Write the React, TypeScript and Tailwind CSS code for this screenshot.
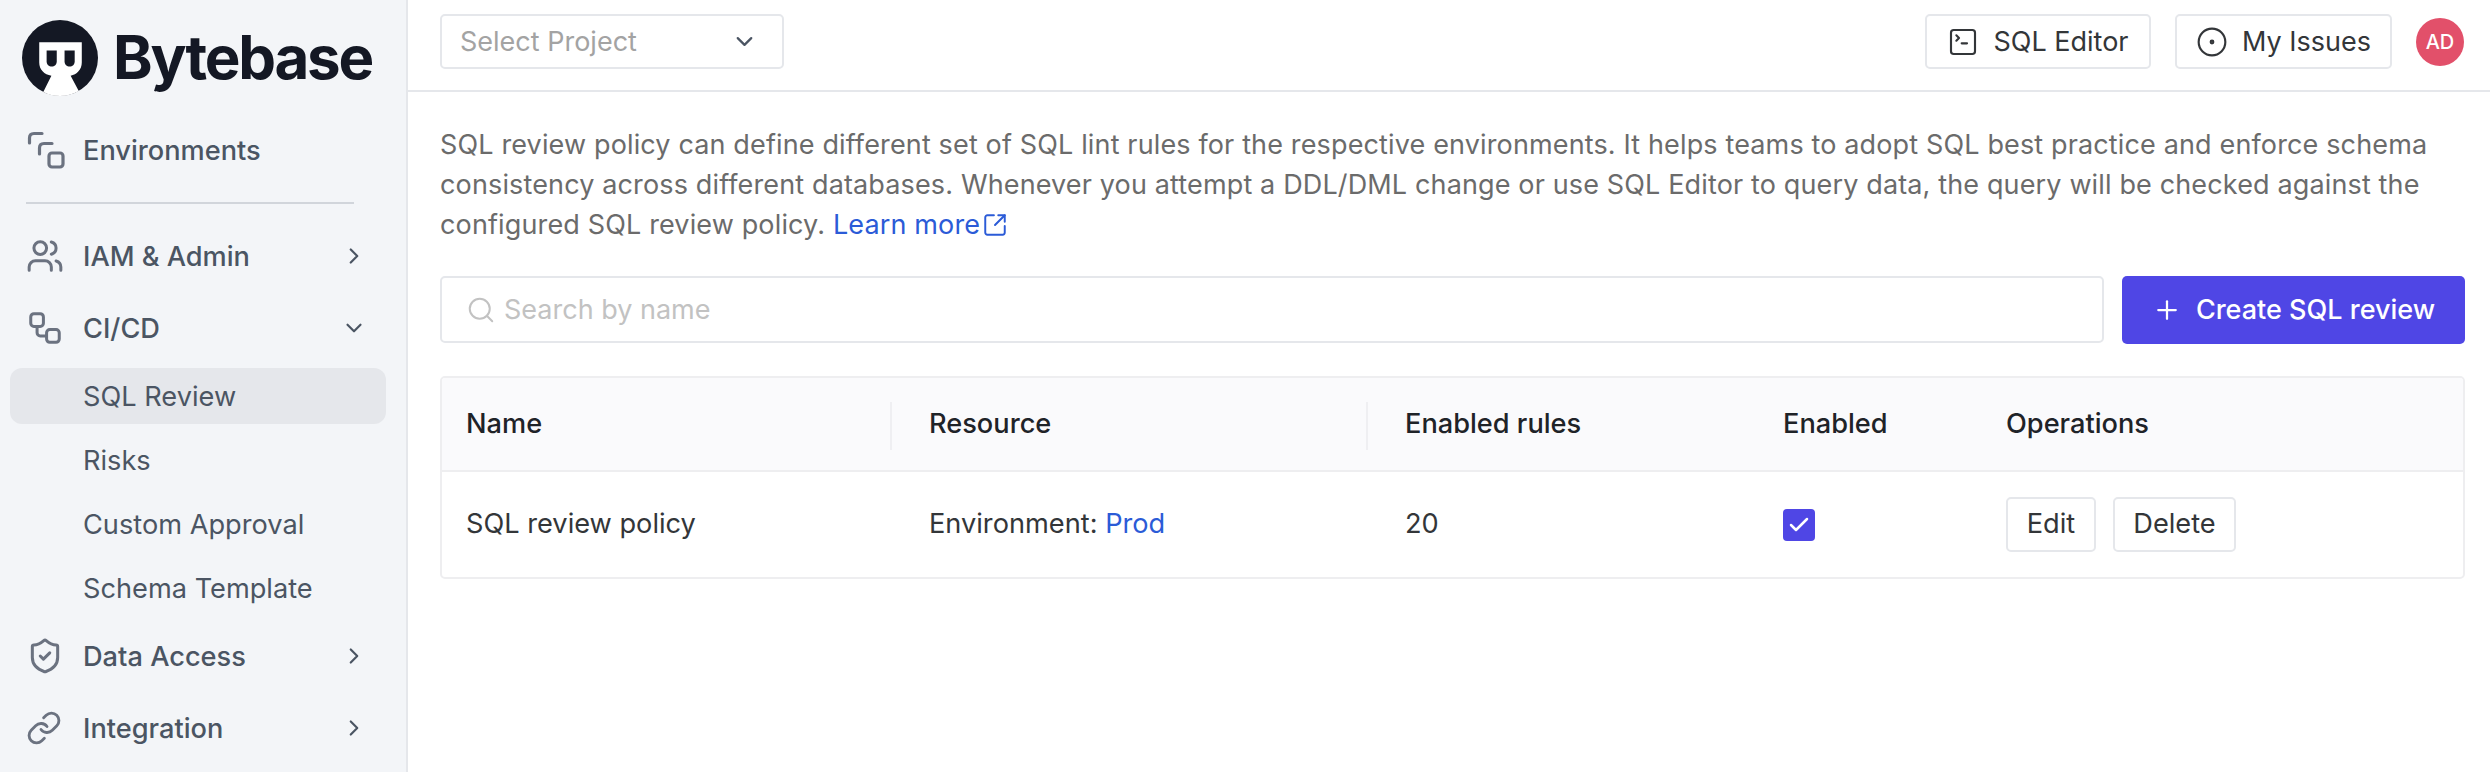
import {
  ChevronDown,
  ChevronRight,
  CircleDot,
  Link,
  Plus,
  Search,
  ShieldCheck,
  SquareArrowOutUpRight,
  SquareTerminal,
  Users,
  Workflow,
  Check,
} from "lucide-react";

const FONT = "font-['Inter',sans-serif]";

// ── Logo ──────────────────────────────────────────────────────────────────────
function LogoMark() {
  return (
    <svg width="76" height="76" viewBox="0 0 75 75" className="shrink-0">
      <circle cx="37.5" cy="37.5" r="37.5" fill="#141824" />
      <path
        d="M17 22 H59 V42 C59 49 54 54 48 55 L56 70 C50 73.5 44 75 37.5 75 C31 75 26 73.5 21 71 L29 55 C22 54 17 49 17 42 Z"
        fill="#ffffff"
      />
      <path d="M24.3 30 H34.3 V41 C34.3 44 32 46 29.3 46 C26.6 46 24.3 44 24.3 41 Z" fill="#141824" />
      <path d="M42 30 H52 V41 C52 44 49.7 46 47 46 C44.3 46 42 44 42 41 Z" fill="#141824" />
    </svg>
  );
}

function EnvironmentsIcon() {
  return (
    <svg
      width="38"
      height="38"
      viewBox="0 0 38 38"
      fill="none"
      stroke="currentColor"
      strokeWidth="3.2"
      strokeLinecap="round"
      className="ml-[1px] shrink-0"
    >
      <path d="M15 2.5 H7 Q2.5 2.5 2.5 7 V12" />
      <path d="M25 12.5 H17 Q12.5 12.5 12.5 17 V23" />
      <rect x="22" y="22" width="14" height="14" rx="3" />
    </svg>
  );
}

// ── Sidebar ───────────────────────────────────────────────────────────────────
function NavItem({
  label,
  icon,
  open,
}: {
  label: string;
  icon: React.ReactNode;
  open?: boolean;
}) {
  return (
    <div className="flex h-[56px] items-center pl-[26px] pr-[45px] text-[#4b5563]">
      <div className="flex w-[57px] shrink-0 items-center text-[#6b7280]">{icon}</div>
      <span className="flex-1 pt-[2px] text-[27.2px] font-medium">{label}</span>
      {open === undefined ? null : open ? (
        <ChevronDown size={26} strokeWidth={2} className="mr-[-6px]" />
      ) : (
        <ChevronRight size={26} strokeWidth={2} className="mr-[-6px]" />
      )}
    </div>
  );
}

function SubItem({ label, active }: { label: string; active?: boolean }) {
  return (
    <div
      className={`flex h-[56px] items-center rounded-[12px] pl-[73px] pt-[2px] text-[27.2px] text-[#4b5563] ${
        active ? "bg-[#e5e7eb]" : ""
      }`}
    >
      {label}
    </div>
  );
}

function Sidebar() {
  return (
    <aside className="flex h-full w-[408px] shrink-0 flex-col overflow-hidden border-r-2 border-[#e5e7eb] bg-[#f3f5f8]">
      <div className="flex items-center gap-[15px] pl-[22px] pt-[20px]">
        <LogoMark />
        <span className="mt-[-3px] text-[60px] leading-none font-bold tracking-[-2.2px] text-[#141824]">
          Bytebase
        </span>
      </div>
      <div className="mt-[26px]">
        <NavItem label="Environments" icon={<EnvironmentsIcon />} />
      </div>
      <div className="mx-[26px] mt-[24px] h-[2px] w-[328px] bg-[#d1d5db]" />
      <div className="mt-[24px] flex flex-col gap-[16px]">
        <NavItem label="IAM & Admin" open={false} icon={<Users size={38} strokeWidth={1.9} />} />
        <NavItem label="CI/CD" open={true} icon={<Workflow size={38} strokeWidth={1.9} />} />
      </div>
      <div className="ml-[10px] mr-[20px] mt-[12px] flex flex-col gap-[8px]">
        <SubItem label="SQL Review" active />
        <SubItem label="Risks" />
        <SubItem label="Custom Approval" />
        <SubItem label="Schema Template" />
      </div>
      <div className="mt-[12px] flex flex-col gap-[16px]">
        <NavItem label="Data Access" open={false} icon={<ShieldCheck size={38} strokeWidth={1.9} />} />
        <NavItem label="Integration" open={false} icon={<Link size={36} strokeWidth={1.9} />} />
      </div>
    </aside>
  );
}

// ── Top bar ───────────────────────────────────────────────────────────────────
function TopBar() {
  return (
    <header className="flex h-[92px] shrink-0 items-start justify-between border-b-2 border-[#e5e7eb] pl-[32px] pr-[26px] pt-[14px]">
      <div className="flex h-[55px] w-[344px] items-center justify-between rounded-[5px] border-2 border-[#e5e7eb] pl-[18px] pr-[24px] text-[27px] text-[#a3a3a3]">
        <span className="pt-[2px]">Select Project</span>
        <ChevronDown size={27} strokeWidth={2} className="text-[#4b5563]" />
      </div>
      <div className="flex items-center gap-[24px] text-[27px] text-[#333639]">
        <div className="flex h-[55px] w-[226px] items-center justify-center gap-[14px] rounded-[5px] border-2 border-[#e5e7eb]">
          <SquareTerminal size={32} strokeWidth={1.6} />
          <span className="pt-[2px]">SQL Editor</span>
        </div>
        <div className="flex items-center gap-[24px]">
          <div className="flex h-[55px] w-[217px] items-center justify-center gap-[14px] rounded-[5px] border-2 border-[#e5e7eb]">
            <CircleDot size={32} strokeWidth={1.6} />
            <span className="pt-[2px]">My Issues</span>
          </div>
          <div className="flex h-[48px] w-[48px] items-center justify-center rounded-full bg-[#e2506a] text-[20px] font-medium text-white">
            AD
          </div>
        </div>
      </div>
    </header>
  );
}

// ── Table ─────────────────────────────────────────────────────────────────────
function HeaderCell({ label, divider }: { label: string; divider?: boolean }) {
  return (
    <div className="relative flex items-center pl-[24px] text-[27.2px] font-medium text-[#1f2328]">
      {label}
      {divider && (
        <span className="absolute right-[13px] top-[24px] h-[48px] w-[2px] bg-[#efeff2]" />
      )}
    </div>
  );
}

function ReviewTable() {
  return (
    <div className="mt-[32px] overflow-hidden rounded-[5px] border-2 border-[#eeeef0] text-[27.2px] text-[#333639]">
      <div className="grid h-[94px] grid-cols-[463px_476px_378px_223px_1fr] border-b-2 border-[#eeeef0] bg-[#fafafc]">
        <HeaderCell label="Name" divider />
        <HeaderCell label="Resource" divider />
        <HeaderCell label="Enabled rules" />
        <HeaderCell label="Enabled" />
        <HeaderCell label="Operations" />
      </div>
      <div className="grid h-[105px] grid-cols-[463px_476px_378px_223px_1fr] items-center">
        <div className="pl-[24px]">SQL review policy</div>
        <div className="pl-[24px]">
          Environment: <span className="text-[#2b5bd7]">Prod</span>
        </div>
        <div className="pl-[24px]">20</div>
        <div className="pl-[24px]">
          <div className="flex h-[32px] w-[32px] items-center justify-center rounded-[4px] bg-[#4f46e5] text-white">
            <Check size={24} strokeWidth={2.5} />
          </div>
        </div>
        <div className="flex gap-[17px] pl-[24px]">
          <div className="flex h-[55px] w-[90px] items-center justify-center rounded-[5px] border-2 border-[#e5e7eb]">
            Edit
          </div>
          <div className="flex h-[55px] w-[123px] items-center justify-center rounded-[5px] border-2 border-[#e5e7eb]">
            Delete
          </div>
        </div>
      </div>
    </div>
  );
}

export default function App() {
  return (
    <div className={`flex h-screen w-full overflow-hidden bg-white ${FONT}`}>
      <Sidebar />
      <main className="flex min-w-0 flex-1 flex-col">
        <TopBar />
        <div className="pl-[32px] pr-[25px] pt-[33px]">
          <p className="text-[27px] leading-[40px] tracking-[0.14px] text-[#6b6b6b]">
            SQL review policy can define different set of SQL lint rules for the respective environments. It helps teams to adopt SQL best practice and enforce schema consistency across different databases. Whenever you attempt a DDL/DML change or use SQL Editor to query data, the query will be checked against the configured SQL review policy.{" "}
            <span className="inline-flex items-center gap-[2px] align-top text-[#2b5bd7]">
              Learn more
              <SquareArrowOutUpRight size={26} strokeWidth={1.8} />
            </span>
          </p>
          <div className="mt-[31px] flex gap-[18px]">
            <div className="flex h-[67px] flex-1 items-center gap-[8px] rounded-[5px] border-2 border-[#e5e7eb] pl-[24px] text-[27px] text-[#c2c2c2]">
              <Search size={30} strokeWidth={1.6} />
              <span className="pt-[2px]">Search by name</span>
            </div>
            <div className="flex h-[68px] w-[343px] items-center justify-center gap-[14px] rounded-[5px] bg-[#4f46e5] text-[27px] font-medium text-white">
              <Plus size={30} strokeWidth={1.8} />
              <span>Create SQL review</span>
            </div>
          </div>
          <ReviewTable />
        </div>
      </main>
    </div>
  );
}
